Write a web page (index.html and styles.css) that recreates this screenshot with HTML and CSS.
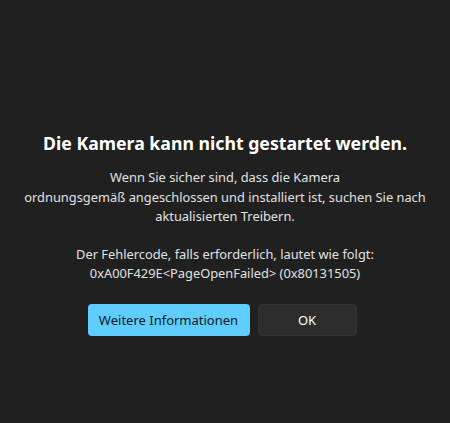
FILE: index.html
```html
<!DOCTYPE html>
<html lang="de">
<head>
<meta charset="utf-8">
<link rel="stylesheet" href="styles.css">
</head>
<body>
<main class="dialog">
  <h1 class="title">Die Kamera kann nicht gestartet werden.</h1>
  <p class="text">Wenn Sie sicher sind, dass die Kamera<br>ordnungsgemäß angeschlossen und installiert ist, suchen Sie nach<br>aktualisierten Treibern.</p>
  <p class="text code">Der Fehlercode, falls erforderlich, lautet wie folgt:<br>0xA00F429E&lt;PageOpenFailed&gt; (0x80131505)</p>
  <div class="actions">
    <button class="btn primary">Weitere Informationen</button>
    <button class="btn secondary">OK</button>
  </div>
</main>
</body>
</html>
```
FILE: styles.css
```css
html, body {
  margin: 0;
  padding: 0;
  background: #202020;
  height: 100%;
}
body {
  font-family: "Noto Sans", "Open Sans", sans-serif;
  color: #e6e6e6;
}
.dialog {
  display: flex;
  flex-direction: column;
  align-items: center;
  padding-top: 130px;
  text-align: center;
}
.title {
  margin: 0;
  font-size: 17.7px;
  line-height: 26px;
  font-weight: 700;
  color: #ffffff;
}
.text {
  margin: 12px 0 0;
  font-size: 12.85px;
  line-height: 19.5px;
  color: #e0e0e0;
}
.code {
  margin-top: 18px;
}
.actions {
  display: flex;
  gap: 8px;
  margin-top: 20px;
  margin-right: 6px;
}
.btn {
  font-family: inherit;
  font-size: 13px;
  height: 32px;
  border-radius: 4px;
  border: 1px solid transparent;
  padding: 0;
}
.primary {
  width: 162px;
  background: #60cdff;
  color: #0b1a22;
}
.secondary {
  width: 99px;
  background: #2d2d2d;
  border-color: #333333;
  color: #ffffff;
}
```
